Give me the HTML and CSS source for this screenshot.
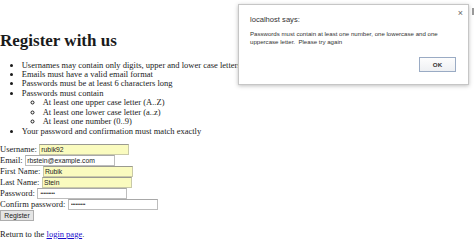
FILE: index.html
```html
<!DOCTYPE html>
<html>
<head>
<meta charset="utf-8">
<title>Register</title>
<link rel="stylesheet" href="styles.css">
</head>
<body>
<h1 class="title">Register with us</h1>
<ul class="rules">
  <li>Usernames may contain only digits, upper and lower case letters</li>
  <li>Emails must have a valid email format</li>
  <li>Passwords must be at least 6 characters long</li>
  <li>Passwords must contain
    <ul class="sub">
      <li>At least one upper case letter (A..Z)</li>
      <li>At least one lower case letter (a..z)</li>
      <li>At least one number (0..9)</li>
    </ul>
  </li>
  <li>Your password and confirmation must match exactly</li>
</ul>
<form class="form">
  <div class="row"><label>Username:</label><input class="field auto" type="text" value="rubik92"></div>
  <div class="row"><label>Email:</label><input class="field" type="text" value="rbstein@example.com"></div>
  <div class="row"><label>First Name:</label><input class="field auto" type="text" value="Rubik"></div>
  <div class="row"><label>Last Name:</label><input class="field auto" type="text" value="Stein"></div>
  <div class="row"><label>Password:</label><input class="field pw" type="password" value="abcdefghi"></div>
  <div class="row"><label>Confirm password:</label><input class="field pw" type="password" value="abcdefghi"></div>
  <div class="row"><button class="btn" type="button">Register</button></div>
</form>
<p class="return">Return to the <a href="#">login page</a>.</p>

<div class="dialog">
  <div class="dlg-title">localhost says:</div>
  <div class="dlg-msg">Passwords must contain at least one number, one lowercase and one uppercase letter.&nbsp; Please try again</div>
  <div class="dlg-actions"><button class="ok" type="button">OK</button></div>
  <span class="close">×</span>
</div>
<span class="edge"></span>
</body>
</html>
```
FILE: styles.css
```css
html, body {
  margin: 0;
  padding: 0;
  background: #fff;
}
body {
  box-sizing: border-box;
  font-family: "Liberation Serif", "Times New Roman", serif;
  font-size: 8.5px;
  line-height: 9.43px;
  color: #1a1a1a;
  padding-top: 19.5px;
  width: 474px;
  height: 251px;
  overflow: hidden;
  position: relative;
}
.title {
  font-size: 17px;
  line-height: 19px;
  margin: 11px 0 11px 0;
  font-weight: bold;
}
.rules {
  margin: 0 0 8px 0;
  padding-left: 21.7px;
}
.rules .sub {
  margin: 0;
  padding-left: 21px;
  list-style-type: circle;
}
.form {
  margin: 0;
}
.row {
  height: 11px;
  display: flex;
  align-items: center;
  gap: 2.5px;
  white-space: nowrap;
}
.field {
  box-sizing: border-box;
  width: 90px;
  height: 11px;
  margin: 0;
  padding: 0 1px;
  border: 1px solid #bdbdbd;
  border-top-color: #a8a8a8;
  background: #fff;
  font-family: "Liberation Sans", Arial, sans-serif;
  font-size: 6.8px;
  color: #222;
  outline: none;
}
.field.pw {
  font-size: 4.6px;
  padding-left: 2px;
}
.field.auto {
  background: #fafbbf;
  border-color: #c9c9a8;
  border-top-color: #9a9a90;
}
.btn {
  box-sizing: border-box;
  height: 11px;
  width: 34px;
  margin: 0;
  padding: 0;
  border: 1px solid #adadad;
  background: #e5e5e5;
  font-family: "Liberation Sans", Arial, sans-serif;
  font-size: 6.8px;
  color: #222;
}
.return {
  margin: 8.5px 0 0 0;
}
.return a {
  color: #1a0dcc;
}

.dialog {
  position: absolute;
  left: 238px;
  top: 3.5px;
  width: 231px;
  height: 81px;
  box-sizing: border-box;
  background: #fff;
  border: 1px solid #c6c6c6;
  box-shadow: 0 1px 4px rgba(0,0,0,0.25);
  font-family: "Liberation Sans", Arial, sans-serif;
  color: #333;
  padding: 10px 11px 0 11px;
}
.dlg-title {
  font-size: 7.6px;
  line-height: 9px;
  color: #333;
}
.dlg-msg {
  margin-top: 6px;
  font-size: 6.1px;
  line-height: 8.6px;
  width: 205px;
  color: #333;
}
.dlg-actions {
  display: flex;
  justify-content: flex-end;
  margin-top: 10px;
}
.ok {
  box-sizing: border-box;
  width: 37px;
  height: 15px;
  margin: 0 1px 0 0;
  padding: 0;
  border: 1px solid #9aabc4;
  background: linear-gradient(#fdfdfd, #eef0f3);
  font-family: "Liberation Sans", Arial, sans-serif;
  font-size: 6.2px;
  font-weight: bold;
  color: #333;
}
.close {
  position: absolute;
  right: 5px;
  top: 4px;
  font-size: 9px;
  line-height: 9px;
  color: #666;
}
.edge {
  position: absolute;
  left: 472px;
  top: 8px;
  width: 2px;
  height: 7px;
  background: #999;
}
```
